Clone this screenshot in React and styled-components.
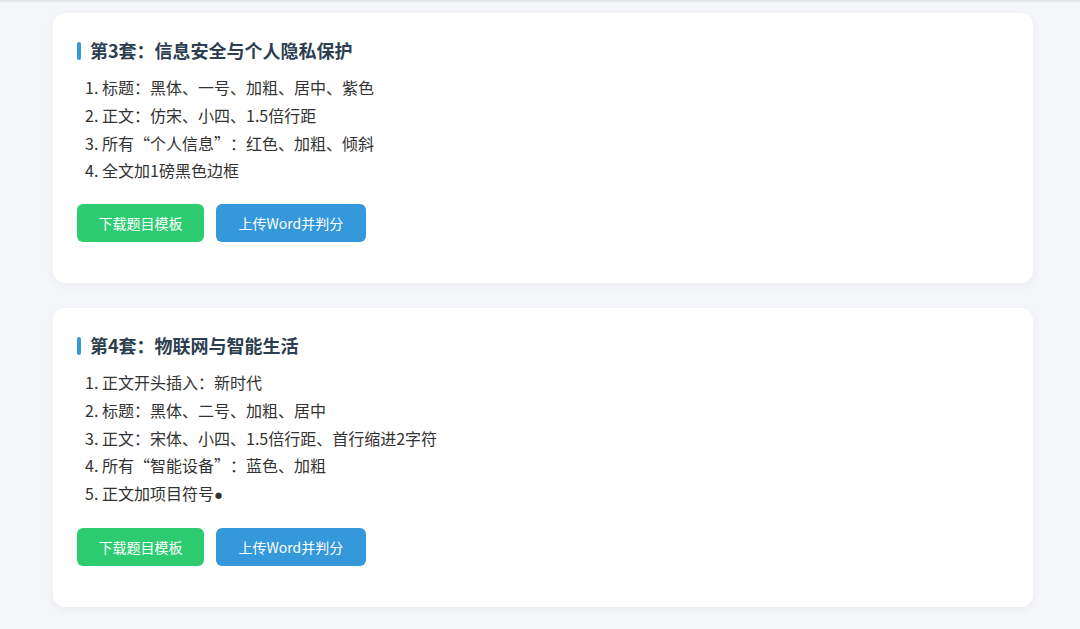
import styled, { createGlobalStyle } from "styled-components";

const GlobalStyle = createGlobalStyle`
  html, body {
    margin: 0;
    padding: 0;
    background: #f5f6fa;
  }
  body {
    font-family: "Noto Sans CJK SC", "Noto Sans", sans-serif;
    text-spacing-trim: space-all;
    border-top: 2px solid #e6e8ec;
  }
`;

const Page = styled.main`
  padding: 11px 47px 24px 53px;
  display: flex;
  flex-direction: column;
  gap: 25px;
`;

const Card = styled.section`
  background: #ffffff;
  border-radius: 12px;
  box-shadow: 0 2px 10px rgba(0, 0, 0, 0.05);
  padding: 24px 24px 41px;
`;

const Title = styled.h3`
  margin: 0;
  font-size: 18px;
  line-height: 27px;
  font-weight: 700;
  color: #2c3e50;
  display: flex;
  align-items: center;
  &::before {
    content: "";
    width: 4px;
    height: 18px;
    border-radius: 2px;
    background: #3498db;
    margin-right: 9px;
  }
`;

const List = styled.ol`
  margin: 10px 0 0;
  padding-left: 25px;
  font-size: 16px;
  line-height: 27.75px;
  color: #333;
`;

const Dot = styled.span`
  font-family: "Liberation Sans", sans-serif;
  font-size: 15px;
`;

const Actions = styled.div`
  display: flex;
  gap: 12px;
  margin-top: 19px;
`;

const Button = styled.button`
  height: 38px;
  padding: 0 ${(p) => (p.$variant === "upload" ? "22.5px" : "21.5px")};
  border: none;
  border-radius: 6px;
  font-family: inherit;
  font-size: 14px;
  color: #fff;
  cursor: pointer;
  background: ${(p) => (p.$variant === "upload" ? "#3498db" : "#2ecc71")};
`;

const sets = [
  {
    title: "第3套：信息安全与个人隐私保护",
    items: [
      "标题：黑体、一号、加粗、居中、紫色",
      "正文：仿宋、小四、1.5倍行距",
      "所有“个人信息”：红色、加粗、倾斜",
      "全文加1磅黑色边框",
    ],
  },
  {
    title: "第4套：物联网与智能生活",
    items: [
      "正文开头插入：新时代",
      "标题：黑体、二号、加粗、居中",
      "正文：宋体、小四、1.5倍行距、首行缩进2字符",
      "所有“智能设备”：蓝色、加粗",
      "正文加项目符号●",
    ],
  },
];

const renderItem = (text) => {
  if (!text.endsWith("●")) return text;
  return (
    <>
      {text.slice(0, -1)}
      <Dot>●</Dot>
    </>
  );
};

const App = () => {
  return (
    <>
      <GlobalStyle />
      <Page>
        {sets.map((s) => (
          <Card key={s.title}>
            <Title>{s.title}</Title>
            <List>
              {s.items.map((it) => (
                <li key={it}>{renderItem(it)}</li>
              ))}
            </List>
            <Actions>
              <Button>下载题目模板</Button>
              <Button $variant="upload">上传Word并判分</Button>
            </Actions>
          </Card>
        ))}
      </Page>
    </>
  );
};

export default App;
